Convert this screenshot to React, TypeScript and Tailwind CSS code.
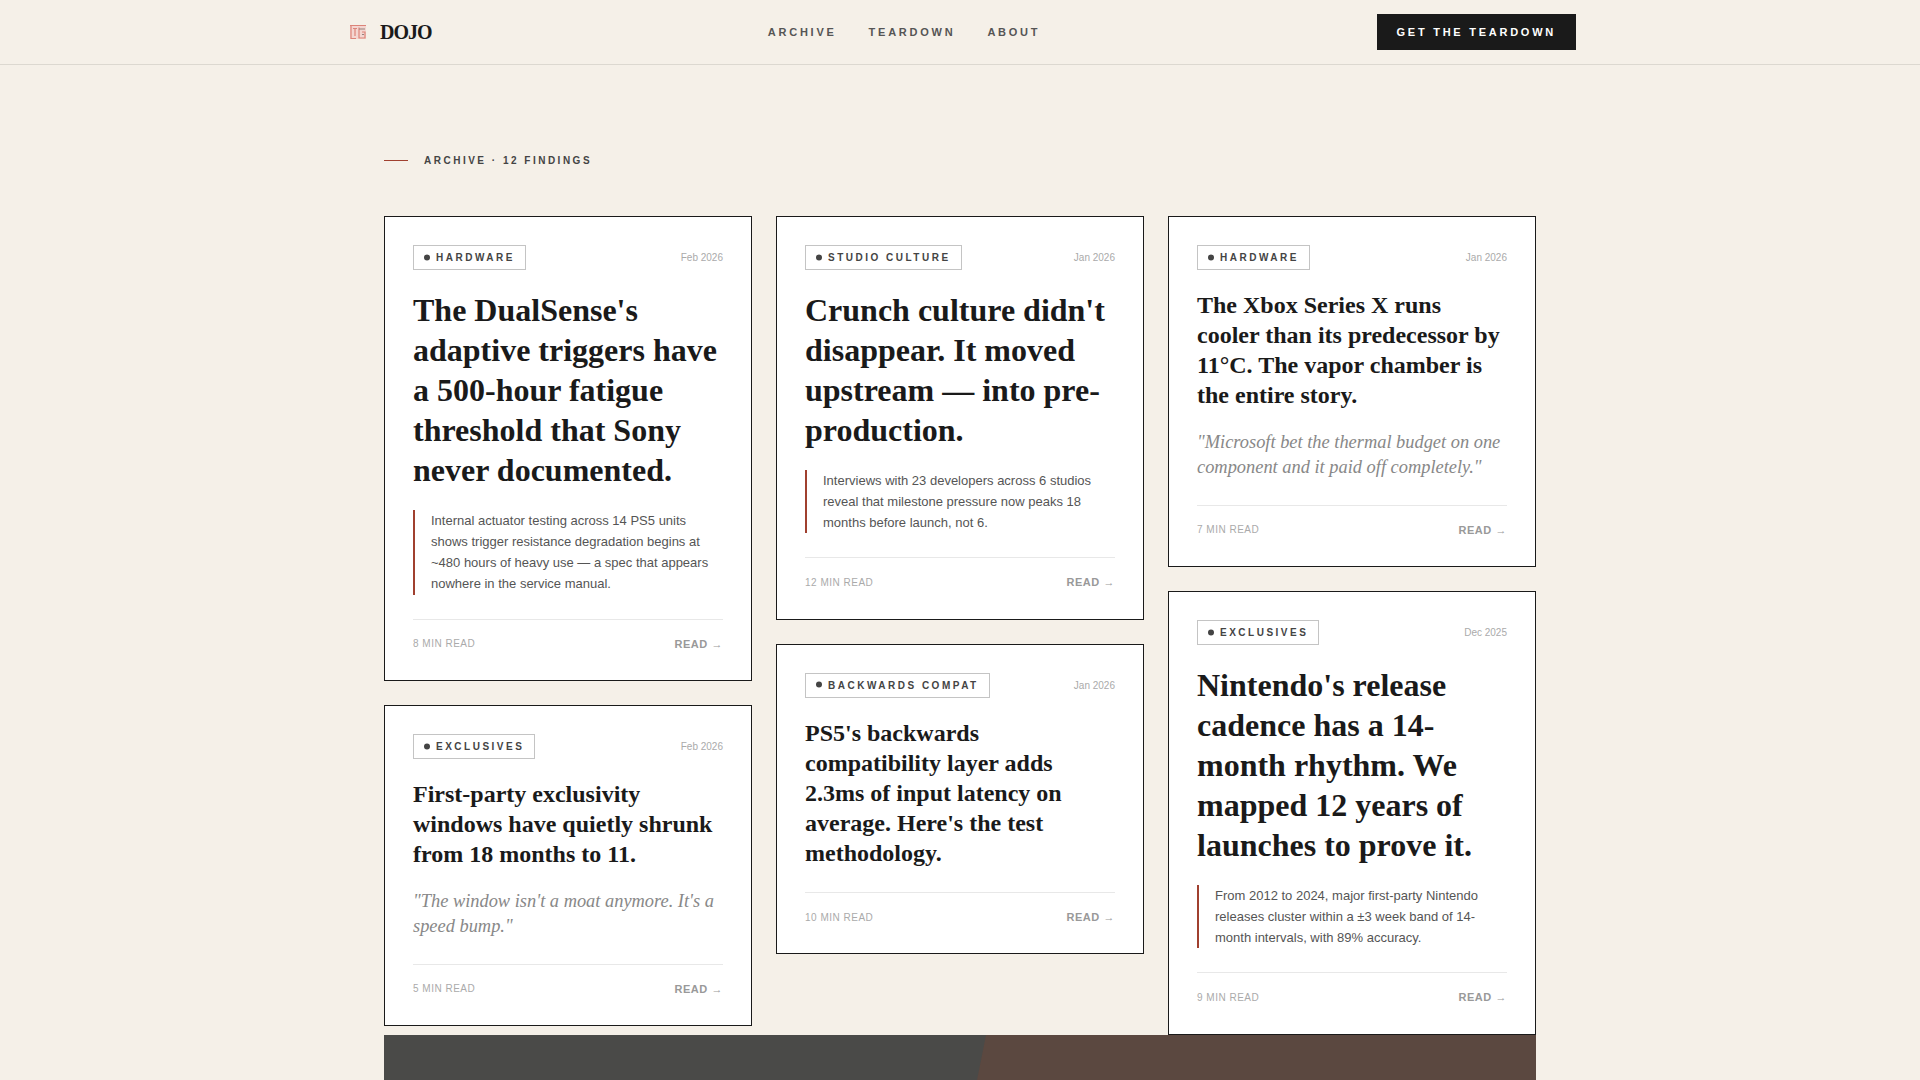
import React from "react";

type Finding = {
	tag: string;
	date: string;
	title: string;
	big?: boolean;
	body?: string;
	quote?: string;
	mins: number;
};

const columns: Finding[][] = [
	[
		{
			tag: "HARDWARE",
			date: "Feb 2026",
			title: "The DualSense's adaptive triggers have a 500-hour fatigue threshold that Sony never documented.",
			big: true,
			body: "Internal actuator testing across 14 PS5 units shows trigger resistance degradation begins at ~480 hours of heavy use — a spec that appears nowhere in the service manual.",
			mins: 8,
		},
		{
			tag: "EXCLUSIVES",
			date: "Feb 2026",
			title: "First-party exclusivity windows have quietly shrunk from 18 months to 11.",
			quote: "\"The window isn't a moat anymore. It's a speed bump.\"",
			mins: 5,
		},
	],
	[
		{
			tag: "STUDIO CULTURE",
			date: "Jan 2026",
			title: "Crunch culture didn't disappear. It moved upstream — into pre-production.",
			big: true,
			body: "Interviews with 23 developers across 6 studios reveal that milestone pressure now peaks 18 months before launch, not 6.",
			mins: 12,
		},
		{
			tag: "BACKWARDS COMPAT",
			date: "Jan 2026",
			title: "PS5's backwards compatibility layer adds 2.3ms of input latency on average. Here's the test methodology.",
			mins: 10,
		},
	],
	[
		{
			tag: "HARDWARE",
			date: "Jan 2026",
			title: "The Xbox Series X runs cooler than its predecessor by 11°C. The vapor chamber is the entire story.",
			quote: "\"Microsoft bet the thermal budget on one component and it paid off completely.\"",
			mins: 7,
		},
		{
			tag: "EXCLUSIVES",
			date: "Dec 2025",
			title: "Nintendo's release cadence has a 14-month rhythm. We mapped 12 years of launches to prove it.",
			big: true,
			body: "From 2012 to 2024, major first-party Nintendo releases cluster within a ±3 week band of 14-month intervals, with 89% accuracy.",
			mins: 9,
		},
	],
];

function Logo() {
	return (
		<svg width="16" height="14" viewBox="0 0 16 14" className="shrink-0">
			<rect x="0" y="0" width="16" height="14" fill="#f4d6d1" />
			<path d="M0 .5H16M1 .5V13.5H6M3 3.5H7M5 3.5V11M9 2.5V13H15V7H12" fill="none" stroke="#dc8479" strokeWidth="1.2" />
			<path d="M9 4H15M12 9.5H14" fill="none" stroke="#94827d" strokeWidth="1" />
		</svg>
	);
}

function Card({ item }: { item: Finding }) {
	const plain = !item.body && !item.quote;
	return (
		<article className="bg-white border border-[#1a1a1a] p-7">
			<div className="flex items-center justify-between mb-5">
				<span className="flex items-center gap-[6px] border border-[#c4c4c4] px-[10px] h-[25px] text-[10px] font-bold tracking-[0.25em] text-[#444]">
					<span className="w-[6px] h-[6px] rounded-full bg-[#444] -translate-y-[0.5px]" />
					{item.tag}
				</span>
				<span className="text-[10px] text-[#aaa]">{item.date}</span>
			</div>
			<h2
				className={
					item.big
						? "font-['Liberation_Serif',serif] font-bold text-[#1a1a1a] text-[32px] leading-[40px] mb-5"
						: plain
							? "font-['Liberation_Serif',serif] font-bold text-[#1a1a1a] text-[24px] leading-[30px] mb-6"
							: "font-['Liberation_Serif',serif] font-bold text-[#1a1a1a] text-[24px] leading-[30px] mb-5"
				}>
				{item.title}
			</h2>
			{item.body && (
				<p className="border-l-2 border-[#a0402f] pl-4 text-[13px] leading-relaxed text-[#555] mb-6">
					{item.body}
				</p>
			)}
			{item.quote && (
				<p className="font-['Liberation_Serif',serif] italic text-[18.4px] leading-[25px] text-[#888] mb-[24.5px]">
					{item.quote}
				</p>
			)}
			<div className="flex items-center justify-between border-t border-[#e8e8e8] pt-4 h-[33.5px]">
				<span className="text-[10px] tracking-[0.05em] text-[#aaa]">{item.mins} MIN READ</span>
				<span className="text-[11px] font-bold tracking-[0.05em] text-[#999]">
					READ <span className="font-normal">→</span>
				</span>
			</div>
		</article>
	);
}

export default function App() {
	return (
		<div className="h-screen overflow-hidden bg-[#f5f0e8] font-['Liberation_Sans',Arial,sans-serif]">
			<header className="border-b border-[#dcd8d0] h-[65px]">
				<div className="max-w-7xl mx-auto px-6 h-16 flex items-center justify-between">
					<a className="flex items-center gap-[14px] pl-[6px]">
						<Logo />
						<span className="font-['Liberation_Serif',serif] font-bold text-[20px] tracking-[-1px] text-[#1a1a1a]">DOJO</span>
					</a>
					<nav className="flex items-center gap-8 text-[11px] font-bold tracking-[0.25em] text-[#555]">
						<a>ARCHIVE</a>
						<a>TEARDOWN</a>
						<a>ABOUT</a>
					</nav>
					<button className="h-9 px-5 bg-[#1a1a1a] text-white text-[11px] font-bold tracking-[0.25em]">
						GET THE TEARDOWN
					</button>
				</div>
			</header>
			<main className="max-w-[1152px] mx-auto">
				<div className="flex items-center gap-4 pt-[88px] mb-12">
					<span className="w-6 h-px bg-[#a0402f]" />
					<span className="text-[10px] font-bold tracking-[0.25em] text-[#444]">ARCHIVE · 12 FINDINGS</span>
				</div>
				<div className="grid grid-cols-3 gap-6">
					{columns.map((col, i) => (
						<div key={i} className="flex flex-col gap-6">
							{col.map((item) => (
								<Card key={item.title} item={item} />
							))}
						</div>
					))}
				</div>
				<div className="relative h-[400px] bg-[#4a4a48]">
					<div className="absolute inset-0 bg-[#5b4840] [clip-path:polygon(602px_0,100%_0,100%_100%,522px_100%)]" />
				</div>
			</main>
		</div>
	);
}
